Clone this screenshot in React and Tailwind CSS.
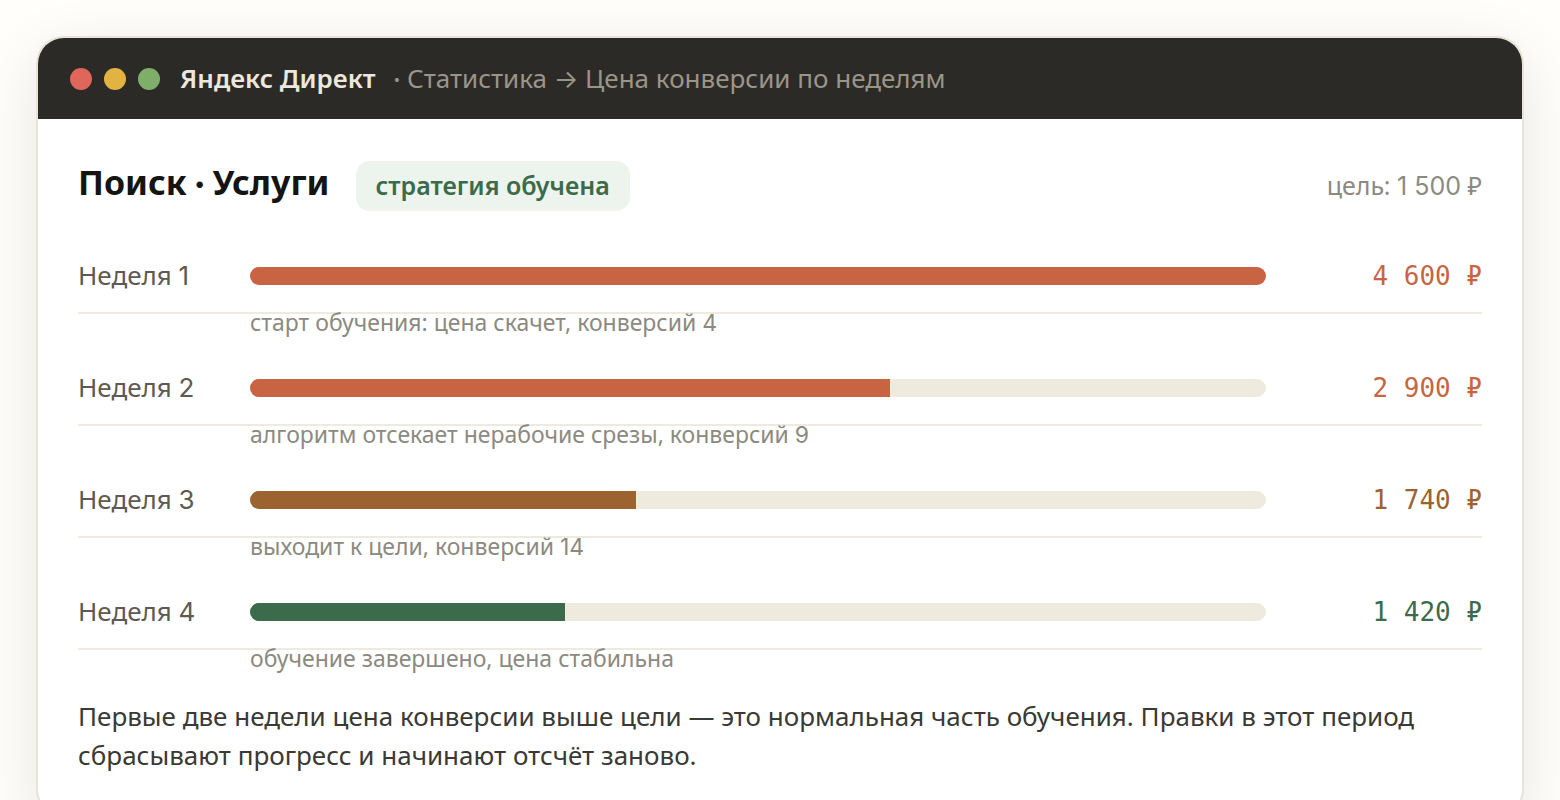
import React from "react";

const weeks = [
  {
    name: "Неделя",
    number: "1",
    percent: 100,
    price: "4 600 ₽",
    note: "старт обучения: цена скачет, конверсий",
    conversions: "4",
    bar: "bg-[#c96442]",
    text: "text-[#c96442]",
  },
  {
    name: "Неделя",
    number: "2",
    percent: 63,
    price: "2 900 ₽",
    note: "алгоритм отсекает нерабочие срезы, конверсий",
    conversions: "9",
    bar: "bg-[#c96442]",
    text: "text-[#c96442]",
  },
  {
    name: "Неделя",
    number: "3",
    percent: 38,
    price: "1 740 ₽",
    note: "выходит к цели, конверсий",
    conversions: "14",
    bar: "bg-[#9c6230]",
    text: "text-[#9c6230]",
  },
  {
    name: "Неделя",
    number: "4",
    percent: 31,
    price: "1 420 ₽",
    note: "обучение завершено, цена стабильна",
    conversions: "",
    bar: "bg-[#3b6b4b]",
    text: "text-[#3b6b4b]",
  },
];

function Num({ children }) {
  return <span className="font-['Inter','Noto_Sans',sans-serif]">{children}</span>;
}

// separators are set in a narrower face than the body text
function Sep({ children }) {
  return <span className="font-['Lato',sans-serif]">{children}</span>;
}

function TitleBar() {
  return (
    <header className="flex items-center gap-5 bg-[#2c2a26] px-8 py-5 text-[26px] leading-[41px]">
      <div className="flex gap-3" aria-hidden="true">
        <span className="size-[22px] rounded-full bg-[#e0655a]" />
        <span className="size-[22px] rounded-full bg-[#e3b341]" />
        <span className="size-[22px] rounded-full bg-[#7fae6b]" />
      </div>
      <p className="flex gap-[18px] text-[#9a958a]">
        <b className="font-semibold text-[#ece8df]">Яндекс Директ</b>
        <span>
          <Sep>{"· "}</Sep>Статистика<Sep> </Sep>
          <Num>→</Num>
          <Sep> </Sep>Цена конверсии по неделям
        </span>
      </p>
    </header>
  );
}

function WeekRow({ week }) {
  return (
    <li className="h-28">
      <div className="flex h-[75px] items-center border-b-2 border-[#eeeade] pt-px text-[26px]">
        <span className="w-[172px] shrink-0 pb-0.5 text-[#5c5a52]">
          {week.name} <Num>{week.number}</Num>
        </span>
        <div
          role="meter"
          aria-label={`${week.name} ${week.number}`}
          aria-valuenow={week.percent}
          className="h-[18px] grow overflow-hidden rounded-full bg-[#eeeade]"
        >
          <div className={`h-full ${week.bar}`} style={{ width: `${week.percent}%` }} />
        </div>
        <span
          className={`w-[216px] shrink-0 text-right font-['DejaVu_Sans_Mono',monospace] ${week.text}`}
        >
          {week.price}
        </span>
      </div>
      <p className="pl-[172px] text-[23px] leading-4 text-[#8c8a80]">
        {week.note} <Num>{week.conversions}</Num>
      </p>
    </li>
  );
}

export default function App() {
  return (
    <div className="bg-[#fffefa] p-9 font-['Noto_Sans',sans-serif]">
      <main className="overflow-hidden rounded-[28px] border-2 border-[#e8e4d9] bg-white shadow-[0_16px_60px_rgba(20,20,19,0.1)]">
        <TitleBar />
        <div className="p-10">
          <div className="flex items-center gap-[26px] pt-0.5">
            <h1 className="pb-2 text-[34px] leading-[42px] font-bold text-[#141413]">
              Поиск<Sep>{" · "}</Sep>Услуги
            </h1>
            <span className="rounded-[14px] bg-[#edf3ed] px-5 pb-0.5 text-[25px] leading-12 font-semibold text-[#3b6b4b]">
              стратегия обучена
            </span>
            <span className="ml-auto text-[25px] text-[#8c8a80]">
              цель: <Num>1 500</Num> ₽
            </span>
          </div>
          <ul className="pt-7">
            {weeks.map((week) => (
              <WeekRow key={week.number} week={week} />
            ))}
          </ul>
          <p className="pt-2.5 text-[26px] leading-[39px] text-[#3a3934]">
            Первые две недели цена конверсии выше цели — это нормальная часть обучения. Правки в этот
            период сбрасывают прогресс и начинают отсчёт заново.
          </p>
        </div>
      </main>
    </div>
  );
}
